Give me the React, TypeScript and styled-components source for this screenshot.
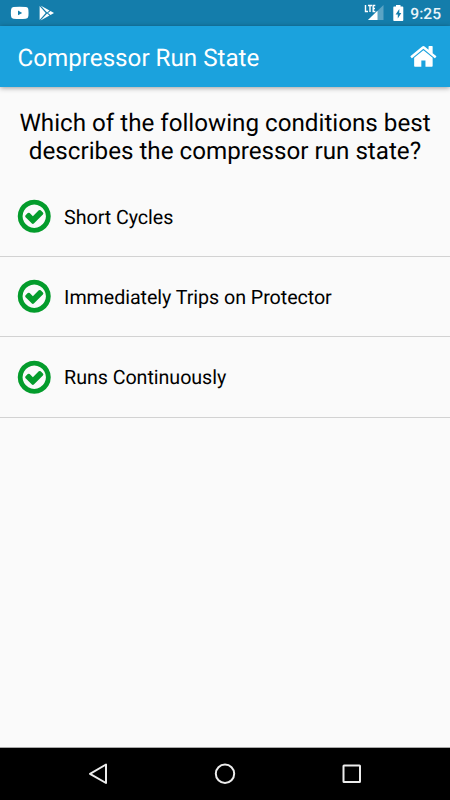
import React from "react";
import styled, { createGlobalStyle } from "styled-components";

const GlobalStyle = createGlobalStyle`
  * { box-sizing: border-box; }
  body {
    margin: 0;
    font-family: Roboto, sans-serif;
    text-rendering: geometricPrecision;
    background: #fafafa;
    color: #000;
  }
`;

const Screen = styled.div`
  display: flex;
  flex-direction: column;
  width: 450px;
  height: 800px;
  overflow: hidden;
  background: #fafafa;
`;

const StatusBar = styled.div`
  flex: none;
  display: flex;
  align-items: center;
  justify-content: space-between;
  height: 26px;
  padding: 0 9px 0 10px;
  background: #147dab;
  color: #fff;
`;

const StatusGroup = styled.div`
  display: flex;
  align-items: center;
`;

const StatusIcon = styled.svg<{ $gap: number }>`
  display: block;
  margin-right: ${(p) => p.$gap}px;
`;

const Clock = styled.time`
  font-size: 15.6px;
  font-weight: 500;
  line-height: 26px;
  padding-top: 2px;
  color: #eaf4f9;
`;

const Header = styled.header`
  flex: none;
  display: flex;
  align-items: center;
  justify-content: space-between;
  height: 61.4px;
  padding: 0 12.6px 0 17.5px;
  background: #1ba2dd;
  color: #fff;
  box-shadow: 0 1px 5px rgba(0, 0, 0, 0.38);
`;

const Title = styled.h1`
  margin: 3px 0 0;
  font-size: 24.2px;
  font-weight: 400;
  line-height: 30px;
`;

const HomeButton = styled.button`
  display: flex;
  padding: 0;
  border: 0;
  background: none;
  color: inherit;
`;

const Main = styled.main`
  flex: 1;
`;

const Question = styled.h2`
  margin: 21.6px 0 10.8px;
  font-size: 24.2px;
  font-weight: 400;
  line-height: 28.4px;
  text-align: center;
`;

const Options = styled.ul`
  margin: 0;
  padding: 0;
  list-style: none;
`;

const Option = styled.li`
  display: flex;
  align-items: center;
  gap: 10.6px;
  height: 80.35px;
  padding-left: 15px;
  border-bottom: 1px solid #d2d2d2;
  font-size: 19.7px;
  letter-spacing: -0.06px;
  line-height: 24px;
`;

const OptionLabel = styled.span`
  padding-top: 3px;
`;

const CheckIcon = styled.svg`
  display: block;
  color: #049c2c;
`;

const NavBar = styled.nav`
  flex: none;
  display: flex;
  justify-content: space-between;
  align-items: center;
  height: 53px;
  padding: 0 84px;
  background: #000;
  border-top: 1px solid #a8a8a8;
`;

const NavIcon = styled.svg`
  display: block;
  fill: none;
  stroke: #ececec;
  stroke-width: 2;
  stroke-linejoin: round;
`;

const options = ["Short Cycles", "Immediately Trips on Protector", "Runs Continuously"];

export default function App() {
  return (
    <Screen>
      <GlobalStyle />
      <StatusBar>
        <StatusGroup>
          <StatusIcon $gap={10} width="19" height="14" viewBox="0 0 19 14">
            <path fill="#fff" fillRule="evenodd" d="M3.500 1 Q9.500.4 15.800 1 Q18.300 1.200 18.400 4 Q18.700 7 18.400 10 Q18.200 12.600 15.800 12.800 Q9.500 13.300 3.500 12.800 Q1.200 12.600 1 10 Q.7 7 1 4 Q1.200 1.200 3.500 1ZM8 4.500V9.300L12.200 6.900Z" />
          </StatusIcon>
          <StatusIcon $gap={0} width="16" height="16" viewBox="0 0 16 16">
            <g fill="#fff">
              <path d="M.6 1V15L6.700 8Z" />
              <path d="M1.500.4L10.500 5.400L8.100 7.500Z" />
              <path d="M1.500 15.600L10.500 10.600L8.100 8.500Z" />
              <path d="M11.500 5.900L15 8L11.500 10.100L9 8Z" />
            </g>
          </StatusIcon>
        </StatusGroup>
        <StatusGroup>
          <StatusIcon $gap={8.500} width="20" height="18" viewBox="0 0 20 18">
            <path d="M4 16L19.500 1V16Z" fill="#5ba4c4" />
            <path d="M4 16L13.500 6.800V16Z" fill="#fff" />
            <path d="M1.500 1V7.500H4M4 1.500H8M6 1.500V8M11.300 1.500H9.200V7.500H11.300M9.200 4.500H11" fill="none" stroke="#fff" strokeWidth="1.400" />
          </StatusIcon>
          <StatusIcon $gap={6.500} width="11" height="16" viewBox="0 0 11 16">
            <path fill="#fff" fillRule="evenodd" d="M3 0H7.500V1.500H9.500Q10.300 1.500 10.300 2.500V15Q10.300 16 9.500 16H1Q.3 16 .3 15V2.500Q.3 1.500 1 1.500H3ZM6.300 4L2.600 9.600H4.800V13.500L8.300 7.900H6.300Z" />
          </StatusIcon>
          <Clock>9:25</Clock>
        </StatusGroup>
      </StatusBar>
      <Header>
        <Title>Compressor Run State</Title>
        <HomeButton aria-label="Home">
          <svg width="28.800" height="28.800" viewBox="0 0 1792 1792" fill="currentColor">
            <path d="M1472 992v480q0 26-19 45t-45 19h-384v-384h-256v384h-384q-26 0-45-19t-19-45v-480q0-1 .5-3t.5-3l575-474 575 474q1 2 1 6zm223-69l-62 74q-8 9-21 11h-3q-13 0-21-7l-692-577-692 577q-12 8-24 7-13-2-21-11l-62-74q-8-10-7-23.500t11-21.500l719-599q32-26 76-26t76 26l244 204v-195q0-14 9-23t23-9h192q14 0 23 9t9 23v408l219 182q10 8 11 21.500t-7 23.500z" />
          </svg>
        </HomeButton>
      </Header>
      <Main>
        <Question>
          Which of the following conditions best
          <br />
          describes the compressor run state?
        </Question>
        <Options>
          {options.map((label) => (
            <Option key={label}>
              <CheckIcon width="38.500" height="38.500" viewBox="0 0 1792 1792" fill="currentColor">
                <path d="M1299 813l-422 422q-19 19-45 19t-45-19l-294-294q-19-19-19-45t19-45l102-102q19-19 45-19t45 19l147 147 275-275q19-19 45-19t45 19l102 102q19 19 19 45t-19 45zm141 83q0-148-73-273t-198-198-273-73-273 73-198 198-73 273 73 273 198 198 273 73 273-73 198-198 73-273zm224 0q0 209-103 385.500t-279.500 279.500-385.500 103-385.500-103-279.500-279.500-103-385.500 103-385.500 279.500-279.500 385.500-103 385.500 103 279.500 279.500 103 385.500z" />
              </CheckIcon>
              <OptionLabel>{label}</OptionLabel>
            </Option>
          ))}
        </Options>
      </Main>
      <NavBar>
        <NavIcon width="28" height="28" viewBox="0 0 28 28">
          <path d="M22 4.500V23L6 13.800Z" />
        </NavIcon>
        <NavIcon width="28" height="28" viewBox="0 0 28 28">
          <circle cx="14" cy="13.700" r="9.200" />
        </NavIcon>
        <NavIcon width="28" height="28" viewBox="0 0 28 28">
          <rect x="5.500" y="5.500" width="16.500" height="16.500" rx=".5" />
        </NavIcon>
      </NavBar>
    </Screen>
  );
}
